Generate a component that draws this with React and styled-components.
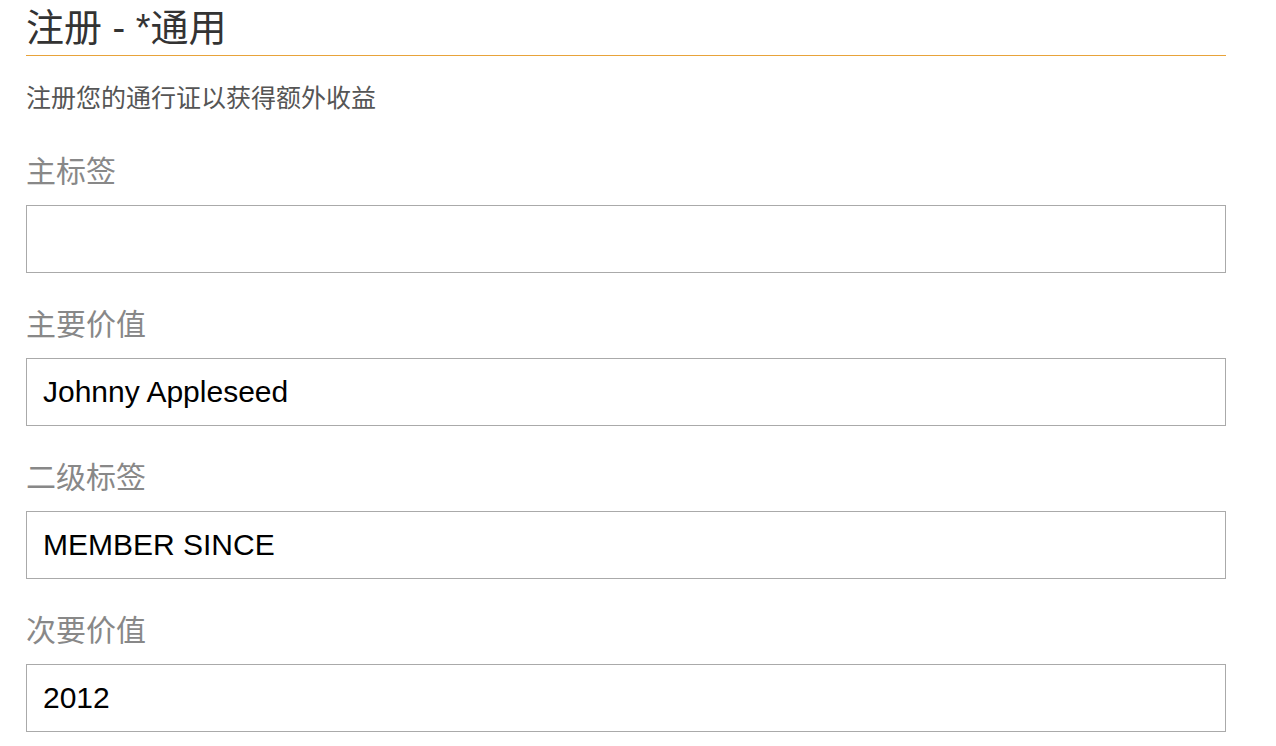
import styled, { createGlobalStyle } from "styled-components";

const GlobalStyle = createGlobalStyle`
    body {
        margin: 0;
        background: #fff;
        font-family: "Liberation Sans", "Noto Sans CJK SC", sans-serif;
    }
`;

const fields = [
    { label: "主标签", value: "" },
    { label: "主要价值", value: "Johnny Appleseed" },
    { label: "二级标签", value: "MEMBER SINCE" },
    { label: "次要价值", value: "2012" },
];

const App = () => {
    return (
        <Page>
            <GlobalStyle />
            <Title>注册 - *通用</Title>
            <Intro>注册您的通行证以获得额外收益</Intro>
            <Form>
                {fields.map((f) => (
                    <Field key={f.label}>
                        <Label>{f.label}</Label>
                        <Input type="text" readOnly value={f.value} />
                    </Field>
                ))}
            </Form>
        </Page>
    );
};

export default App;

const Page = styled.div`
    width: 1200px;
    padding: 0 26px;
`;

const Title = styled.h1`
    margin: 0;
    padding: 6px 0 4px;
    font-size: 38px;
    line-height: 45px;
    font-weight: 400;
    color: #333;
    border-bottom: 1px solid #e8a33a;
`;

const Intro = styled.p`
    margin: 27px 0 41px;
    font-size: 25px;
    line-height: 30px;
    color: #555;
`;

const Form = styled.div`
    display: flex;
    flex-direction: column;
    gap: 34px;
`;

const Field = styled.div`
    display: flex;
    flex-direction: column;
    gap: 15px;
`;

const Label = styled.label`
    font-size: 30px;
    line-height: 36px;
    color: #888;
`;

const Input = styled.input`
    box-sizing: border-box;
    width: 100%;
    height: 68px;
    margin: 0;
    padding: 0 16px;
    border: 1px solid #aaa;
    border-radius: 0;
    outline: none;
    background: #fff;
    font-family: "Liberation Sans", "Noto Sans CJK SC", sans-serif;
    font-size: 30px;
    color: #000;
`;
